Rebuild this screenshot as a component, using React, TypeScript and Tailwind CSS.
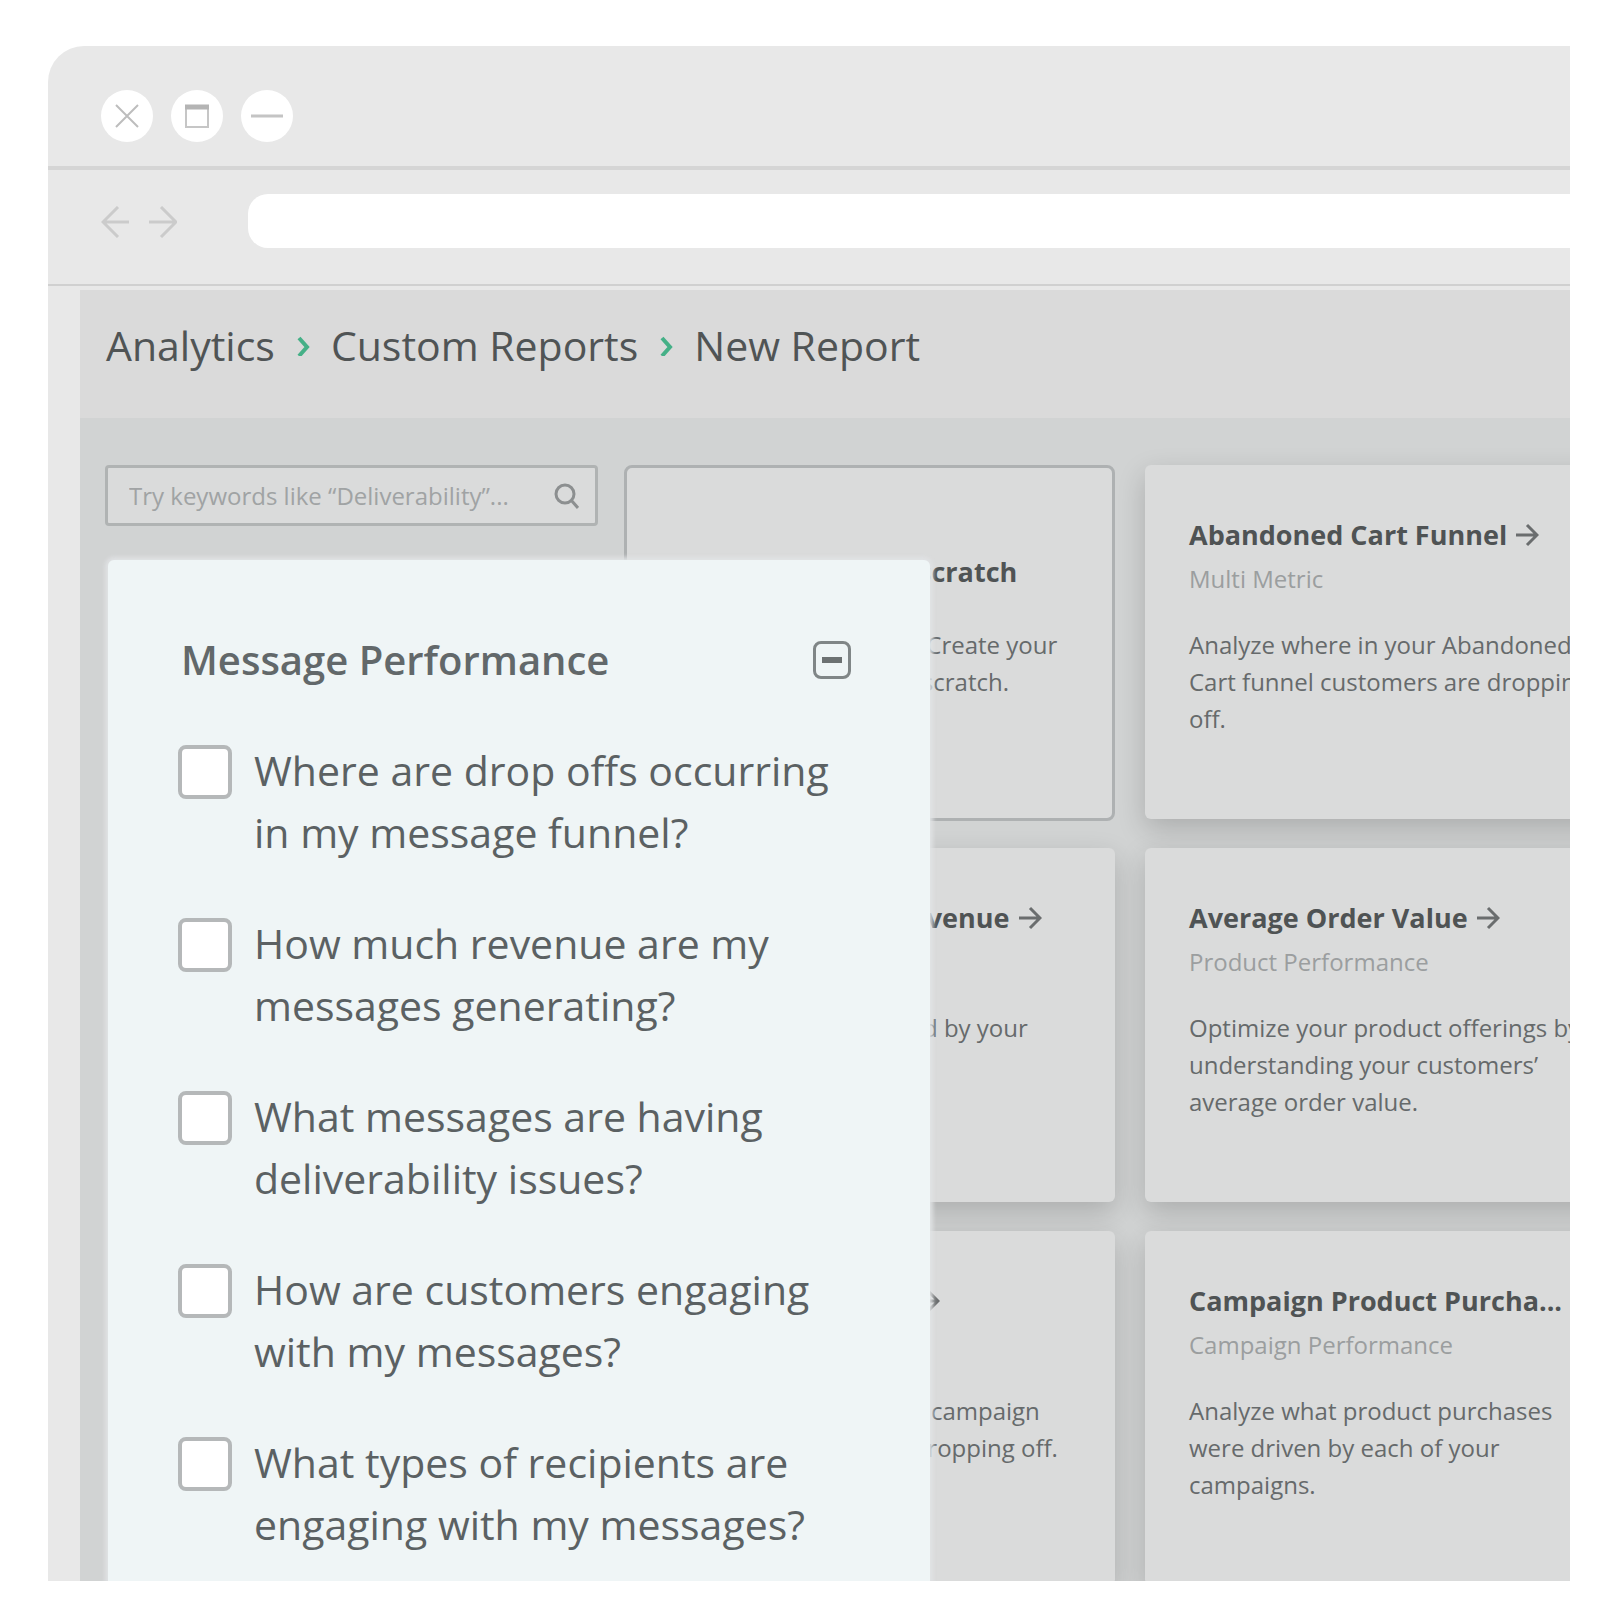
import React from 'react';

type Report = {
    title: string;
    category: string;
    description: string[];
};

const questions: string[][] = [
    ['Where are drop offs occurring', 'in my message funnel?'],
    ['How much revenue are my', 'messages generating?'],
    ['What messages are having', 'deliverability issues?'],
    ['How are customers engaging', 'with my messages?'],
    ['What types of recipients are', 'engaging with my messages?'],
];

const reports: Report[] = [
    {
        title: 'Abandoned Cart Funnel',
        category: 'Multi Metric',
        description: ['Analyze where in your Abandoned', 'Cart funnel customers are dropping', 'off.'],
    },
    {
        title: 'Attributed Sales Revenue',
        category: 'Multi Metric',
        description: ['Analyze revenue earned by your', 'messages.'],
    },
    {
        title: 'Average Order Value',
        category: 'Product Performance',
        description: ['Optimize your product offerings by', 'understanding your customers’', 'average order value.'],
    },
    {
        title: 'Campaign Results',
        category: 'Multi Metric',
        description: ['Discover where in your campaign', 'funnel customers are dropping off.'],
    },
    {
        title: 'Campaign Product Purcha...',
        category: 'Campaign Performance',
        description: ['Analyze what product purchases', 'were driven by each of your', 'campaigns.'],
    },
];

const ArrowIcon: React.FC = () => (
    <svg className="w-6 h-6 shrink-0" viewBox="0 0 24 24" fill="none" stroke="#6a6d6e" strokeWidth="3">
        <path d="M1 12h20M12 2l10 10-10 10" />
    </svg>
);

const Chevron: React.FC = () => (
    <svg className="w-4 h-5 shrink-0" viewBox="0 0 16 20" fill="none" stroke="#45b087" strokeWidth="4">
        <path d="M4 2l8 9-8 9" />
    </svg>
);

const WindowButtons: React.FC = () => (
    <div className="flex items-center shrink-0 gap-[18px] h-[124px] pt-5 pl-[53px] border-b-4 border-[#d5d5d5]">
        <button aria-label="Close" className="flex items-center justify-center w-[52px] h-[52px] rounded-full bg-white">
            <svg width="28" height="28" viewBox="0 0 28 28" stroke="#bdbdbd" strokeWidth="2">
                <path d="M3 3l22 22M25 3L3 25" />
            </svg>
        </button>
        <button aria-label="Maximize" className="flex items-center justify-center w-[52px] h-[52px] rounded-full bg-white">
            <svg width="26" height="26" viewBox="0 0 26 26" fill="none">
                <path d="M2 3h22v21H2z" stroke="#c6c6c6" strokeWidth="2" />
                <path d="M1 4h24" stroke="#b4b4b4" strokeWidth="5" />
            </svg>
        </button>
        <button aria-label="Minimize" className="flex items-center justify-center w-[52px] h-[52px] rounded-full bg-white">
            <svg width="32" height="4" viewBox="0 0 32 4" stroke="#c4c4c4" strokeWidth="3">
                <path d="M0 2h32" />
            </svg>
        </button>
    </div>
);

const AddressBar: React.FC = () => (
    <div className="flex items-start shrink-0 pt-6 pl-[53px] h-[116px] border-b-2 border-[#d0d0d0]">
        <div className="flex items-center gap-5 h-14 w-[147px] shrink-0">
            <button aria-label="Back">
                <svg width="28" height="32" viewBox="0 0 28 32" fill="none" stroke="#cbcbcb" strokeWidth="3">
                    <path d="M28 16H2M17 1L2 16l15 15" />
                </svg>
            </button>
            <button aria-label="Forward">
                <svg width="28" height="32" viewBox="0 0 28 32" fill="none" stroke="#cbcbcb" strokeWidth="3">
                    <path d="M0 16h26M12 1l15 15-15 15" />
                </svg>
            </button>
        </div>
        <input type="text" aria-label="Address" className="grow min-w-0 h-[54px] rounded-l-[20px] bg-white px-6 outline-none" />
    </div>
);

const ReportCard: React.FC<{ report: Report }> = ({ report }) => (
    <article className="h-[354px] pt-[52px] px-11 rounded-md bg-[#dadbdb] shadow-[0_10px_28px_rgba(0,0,0,0.18)] whitespace-nowrap">
        <h3>
            <a href="#" className="flex items-center gap-2 text-[27px] leading-9 font-bold text-[#4f5354]">
                {report.title}
                <ArrowIcon />
            </a>
        </h3>
        <p className="mt-2 text-[24px] leading-9 text-[#9b9e9f]">{report.category}</p>
        <p className="mt-[29px] text-[24px] leading-[37px] text-[#666a6b]">
            {report.description.map((line) => (
                <span key={line} className="block">{line}</span>
            ))}
        </p>
    </article>
);

const FilterPanel: React.FC = () => (
    <section className="absolute left-[28px] top-[142px] bottom-0 w-[822px] pt-[73px] pl-[70px] pr-[79px] rounded-t-md bg-[#eff5f6] shadow-[0_0_4px_3px_rgba(224,227,229,0.95)]">
        <div className="flex items-center justify-between pl-[3px] h-[54px]">
            <h2 className="text-[40px] font-semibold text-[#62686a]">Message Performance</h2>
            <button
                aria-label="Collapse"
                className="flex items-center justify-center w-[38px] h-[38px] rounded-lg border-3 border-[#808687]"
            >
                <span className="w-5 h-[6px] bg-[#6c7172]"></span>
            </button>
        </div>
        <div className="mt-[52px] space-y-[49px]">
            {questions.map((lines) => (
                <label key={lines[0]} className="flex items-start gap-[22px] text-[41px] leading-[62px] text-[#5b6163] whitespace-nowrap">
                    <input
                        type="checkbox"
                        className="appearance-none shrink-0 mt-[6px] w-[54px] h-[54px] rounded-lg border-4 border-[#b5b8b9] bg-white"
                    />
                    <span>
                        {lines.map((line) => (
                            <span key={line} className="block">{line}</span>
                        ))}
                    </span>
                </label>
            ))}
        </div>
    </section>
);

const App: React.FC = () => {
    return (
        <div className="flex h-screen bg-white pt-[46px] pl-12 pr-[30px] pb-[31px] font-['Open_Sans',sans-serif]">
            <div className="flex flex-col grow min-w-0 overflow-hidden rounded-tl-[36px] bg-[#e8e8e8]">
                <WindowButtons />
                <AddressBar />
                <div className="flex flex-col grow min-h-0 mt-1 ml-8">
                    <nav aria-label="Breadcrumb" className="flex items-center shrink-0 gap-5 h-32 pl-[26px] pb-4 bg-[#dadada] text-[41px] text-[#505455] whitespace-nowrap">
                        <a href="#">Analytics</a>
                        <Chevron />
                        <a href="#">Custom Reports</a>
                        <Chevron />
                        <span>New Report</span>
                    </nav>
                    <main className="relative flex items-start grow min-h-0 gap-[26px] pt-[47px] pl-[25px] overflow-hidden bg-[#d1d3d3]">
                        <label className="flex items-center shrink-0 w-[493px] h-[61px] pl-[21px] pr-4 border-3 border-[#b0b3b3] rounded-sm bg-[#dadbdb]">
                            <input
                                type="search"
                                aria-label="Search reports"
                                placeholder="Try keywords like “Deliverability”..."
                                className="grow min-w-0 text-[24px] outline-none placeholder:text-[#a0a3a4]"
                            />
                            <svg width="26" height="26" viewBox="0 0 26 26" fill="none" stroke="#8c8f90" strokeWidth="3">
                                <circle cx="12" cy="11" r="9" />
                                <path d="M18 17l7 8" />
                            </svg>
                        </label>
                        <div className="grid grid-cols-[491px_491px] gap-x-[30px] gap-y-[29px]">
                            <article className="h-[356px] -mb-[2px] pt-[86px] border-3 border-[#aeb1b2] rounded-lg bg-[#dadbdb] text-center whitespace-nowrap">
                                <h3 className="text-[27px] leading-9 font-bold text-[#4f5354]">Create it from scratch</h3>
                                <p className="mt-9 text-[24px] leading-[37px] text-[#666a6b]">
                                    <span className="block">Have what you need? Create your</span>
                                    <span className="block">own report from scratch.</span>
                                </p>
                            </article>
                            {reports.map((report) => (
                                <ReportCard key={report.title} report={report} />
                            ))}
                        </div>
                        <FilterPanel />
                    </main>
                </div>
            </div>
        </div>
    );
};

export default App;
